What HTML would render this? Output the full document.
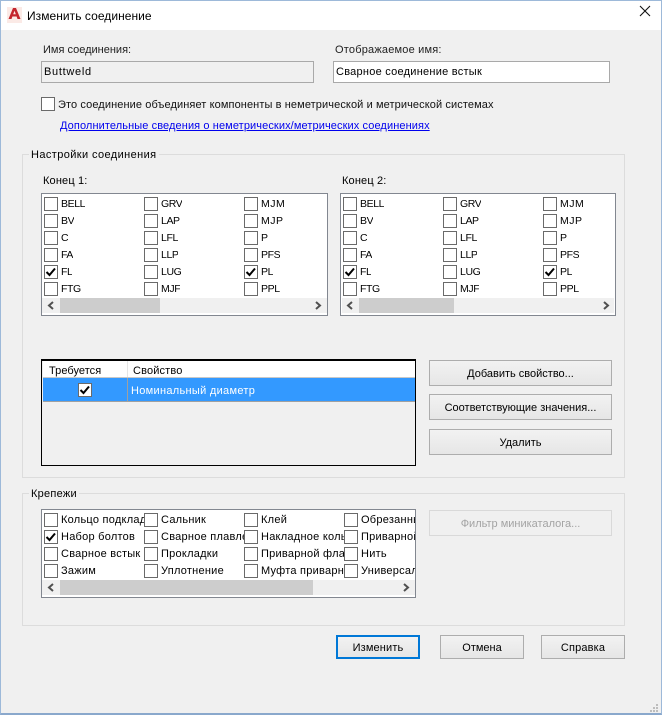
<!DOCTYPE html>
<html><head><meta charset="utf-8"><style>
html,body{margin:0;padding:0;width:662px;height:715px;overflow:hidden;background:#f0f0f0}
body{position:relative;font-family:"Liberation Sans",sans-serif;font-size:11px;color:#000;letter-spacing:.25px}
div,svg{position:absolute;box-sizing:border-box}
.t{line-height:14px;padding-top:1px;height:15px;white-space:nowrap;overflow:hidden}
.x{font-size:10.5px;letter-spacing:-.4px}
.m{font-size:10.5px;letter-spacing:.5px}
.c{width:14px;height:14px;border:1px solid #6a6a6a;background:#fff}
.b{border:1px solid #adadad;background:linear-gradient(#f2f2f2,#e6e6e6);text-align:center;white-space:nowrap;letter-spacing:0}
.g{border:1px solid #dcdcdc}
.l{background:#fff;border:1px solid #828790}
.sb{background:#f0f0f0;height:15px}
.th{background:#cdcdcd;height:15px}
</style></head><body>
<div style="left:0;top:0;width:662px;height:715px;border:1px solid #9db9d9;border-bottom:2px solid #8aa8cc"></div>
<div style="left:1px;top:1px;width:660px;height:29px;background:#fff"></div>
<div style="left:7px;top:7px;width:15px;height:16px;background:#fbeae6"></div>
<svg style="left:7px;top:7px" width="15" height="16" viewBox="0 0 15 16"><path d="M1.5 12 L6 1 H9 L13.5 12 H10.5 L9.6 9.5 H5.4 L4.5 12 Z M6.2 7.3 H8.8 L7.5 3.8 Z" fill="#c4262e" fill-rule="evenodd"/></svg>
<div class="t" style="left:27px;top:8px;font-size:12px;letter-spacing:.05px;height:16px">Изменить соединение</div>
<svg style="left:639px;top:5px" width="12" height="12" viewBox="0 0 12 12"><path d="M1 1 L11 11 M11 1 L1 11" stroke="#111" stroke-width="1.1"/></svg>

<div class="t" style="left:43px;top:42px;color:#222;letter-spacing:0">Имя соединения:</div>
<div style="left:41px;top:61px;width:273px;height:22px;background:#f0f0f0;border:1px solid #a9a9a9"></div>
<div class="t" style="left:44px;top:64px;letter-spacing:.7px">Buttweld</div>
<div class="t" style="left:335px;top:42px;color:#222;letter-spacing:.2px">Отображаемое имя:</div>
<div style="left:333px;top:61px;width:277px;height:22px;background:#fff;border:1px solid #a9a9a9"></div>
<div class="t" style="left:336px;top:64px">Сварное соединение встык</div>

<div class="c" style="left:41px;top:97px"></div>
<div class="t" style="left:58px;top:97px;color:#111;letter-spacing:.1px">Это соединение объединяет компоненты в неметрической и метрической системах</div>
<div class="t" style="left:60px;top:118px;color:#0000ee;text-decoration:underline;letter-spacing:.1px">Дополнительные сведения о неметрических/метрических соединениях</div>

<div class="g" style="left:22px;top:154px;width:603px;height:324px"></div>
<div class="t" style="left:29px;top:147px;background:#f0f0f0;padding:1px 2px 0;letter-spacing:.4px">Настройки соединения</div>
<div class="t" style="left:43px;top:173px;letter-spacing:.15px">Конец 1:</div>
<div class="l" style="left:41px;top:193px;width:287px;height:123px"></div>
<div class="t" style="left:342px;top:173px;letter-spacing:.15px">Конец 2:</div>
<div class="l" style="left:340px;top:193px;width:276px;height:123px"></div>

<div class="c" style="left:44px;top:197px"></div><div class="t x" style="left:61px;top:196px">BELL</div>
<div class="c" style="left:44px;top:214px"></div><div class="t x" style="left:61px;top:213px">BV</div>
<div class="c" style="left:44px;top:231px"></div><div class="t x" style="left:61px;top:230px">C</div>
<div class="c" style="left:44px;top:248px"></div><div class="t x" style="left:61px;top:247px">FA</div>
<div class="c" style="left:44px;top:265px"><svg style="left:0;top:0" width="12" height="12"><path d="M1.5 6 L4.5 9 L10 2.5" stroke="#000" stroke-width="2" fill="none"/></svg></div><div class="t x" style="left:61px;top:264px">FL</div>
<div class="c" style="left:44px;top:282px"></div><div class="t x" style="left:61px;top:281px">FTG</div>
<div class="c" style="left:144px;top:197px"></div><div class="t x" style="left:161px;top:196px">GRV</div>
<div class="c" style="left:144px;top:214px"></div><div class="t x" style="left:161px;top:213px">LAP</div>
<div class="c" style="left:144px;top:231px"></div><div class="t x" style="left:161px;top:230px">LFL</div>
<div class="c" style="left:144px;top:248px"></div><div class="t x" style="left:161px;top:247px">LLP</div>
<div class="c" style="left:144px;top:265px"></div><div class="t x" style="left:161px;top:264px">LUG</div>
<div class="c" style="left:144px;top:282px"></div><div class="t x" style="left:161px;top:281px">MJF</div>
<div class="c" style="left:244px;top:197px"></div><div class="t m" style="left:261px;top:196px">MJM</div>
<div class="c" style="left:244px;top:214px"></div><div class="t m" style="left:261px;top:213px">MJP</div>
<div class="c" style="left:244px;top:231px"></div><div class="t x" style="left:261px;top:230px">P</div>
<div class="c" style="left:244px;top:248px"></div><div class="t x" style="left:261px;top:247px">PFS</div>
<div class="c" style="left:244px;top:265px"><svg style="left:0;top:0" width="12" height="12"><path d="M1.5 6 L4.5 9 L10 2.5" stroke="#000" stroke-width="2" fill="none"/></svg></div><div class="t x" style="left:261px;top:264px">PL</div>
<div class="c" style="left:244px;top:282px"></div><div class="t x" style="left:261px;top:281px">PPL</div>
<div class="sb" style="left:42px;top:298px;width:285px"></div><div class="th" style="left:60px;top:298px;width:100px"></div>
<svg style="left:47px;top:301px" width="8" height="9"><path d="M6 1 L2 4.5 L6 8" stroke="#505050" stroke-width="2" fill="none"/></svg>
<svg style="left:314px;top:301px" width="8" height="9"><path d="M2 1 L6 4.5 L2 8" stroke="#505050" stroke-width="2" fill="none"/></svg>

<div class="c" style="left:343px;top:197px"></div><div class="t x" style="left:360px;top:196px">BELL</div>
<div class="c" style="left:343px;top:214px"></div><div class="t x" style="left:360px;top:213px">BV</div>
<div class="c" style="left:343px;top:231px"></div><div class="t x" style="left:360px;top:230px">C</div>
<div class="c" style="left:343px;top:248px"></div><div class="t x" style="left:360px;top:247px">FA</div>
<div class="c" style="left:343px;top:265px"><svg style="left:0;top:0" width="12" height="12"><path d="M1.5 6 L4.5 9 L10 2.5" stroke="#000" stroke-width="2" fill="none"/></svg></div><div class="t x" style="left:360px;top:264px">FL</div>
<div class="c" style="left:343px;top:282px"></div><div class="t x" style="left:360px;top:281px">FTG</div>
<div class="c" style="left:443px;top:197px"></div><div class="t x" style="left:460px;top:196px">GRV</div>
<div class="c" style="left:443px;top:214px"></div><div class="t x" style="left:460px;top:213px">LAP</div>
<div class="c" style="left:443px;top:231px"></div><div class="t x" style="left:460px;top:230px">LFL</div>
<div class="c" style="left:443px;top:248px"></div><div class="t x" style="left:460px;top:247px">LLP</div>
<div class="c" style="left:443px;top:265px"></div><div class="t x" style="left:460px;top:264px">LUG</div>
<div class="c" style="left:443px;top:282px"></div><div class="t x" style="left:460px;top:281px">MJF</div>
<div class="c" style="left:543px;top:197px"></div><div class="t m" style="left:560px;top:196px">MJM</div>
<div class="c" style="left:543px;top:214px"></div><div class="t m" style="left:560px;top:213px">MJP</div>
<div class="c" style="left:543px;top:231px"></div><div class="t x" style="left:560px;top:230px">P</div>
<div class="c" style="left:543px;top:248px"></div><div class="t x" style="left:560px;top:247px">PFS</div>
<div class="c" style="left:543px;top:265px"><svg style="left:0;top:0" width="12" height="12"><path d="M1.5 6 L4.5 9 L10 2.5" stroke="#000" stroke-width="2" fill="none"/></svg></div><div class="t x" style="left:560px;top:264px">PL</div>
<div class="c" style="left:543px;top:282px"></div><div class="t x" style="left:560px;top:281px">PPL</div>
<div class="sb" style="left:342px;top:298px;width:272px"></div><div class="th" style="left:359px;top:298px;width:95px"></div>
<svg style="left:346px;top:301px" width="8" height="9"><path d="M6 1 L2 4.5 L6 8" stroke="#505050" stroke-width="2" fill="none"/></svg>
<svg style="left:602px;top:301px" width="8" height="9"><path d="M2 1 L6 4.5 L2 8" stroke="#505050" stroke-width="2" fill="none"/></svg>

<div style="left:41px;top:359px;width:375px;height:107px;border:1px solid #000;border-width:2px 1px 1px 1px;background:#f0f0f0"></div>
<div style="left:43px;top:361px;width:372px;height:16px;background:#fff"></div>
<div style="left:127px;top:361px;width:1px;height:16px;background:#e5e5e5"></div>
<div class="t" style="left:49px;top:363px;letter-spacing:.05px">Требуется</div>
<div class="t" style="left:133px;top:363px;letter-spacing:.15px">Свойство</div>
<div style="left:43px;top:377px;width:372px;height:25px;background:#3399ff;border-top:1px solid #c8c8c8;border-bottom:1px solid #a0a0a0"></div>
<div style="left:127px;top:378px;width:1px;height:24px;background:#a0a0a0"></div>
<div class="c" style="left:78px;top:383px"><svg style="left:0;top:0" width="12" height="12"><path d="M1.5 6 L4.5 9 L10 2.5" stroke="#000" stroke-width="2" fill="none"/></svg></div>
<div class="t" style="left:131px;top:383px;color:#fff;letter-spacing:.3px">Номинальный диаметр</div>

<div class="b" style="left:429px;top:360px;width:183px;height:26px;line-height:26px">Добавить свойство...</div>
<div class="b" style="left:429px;top:394px;width:183px;height:26px;line-height:26px">Соответствующие значения...</div>
<div class="b" style="left:429px;top:429px;width:183px;height:26px;line-height:26px">Удалить</div>

<div class="g" style="left:22px;top:493px;width:603px;height:133px"></div>
<div class="t" style="left:29px;top:486px;background:#f0f0f0;padding:1px 2px 0">Крепежи</div>
<div class="l" style="left:41px;top:509px;width:375px;height:89px"></div>

<div class="t" style="left:61px;top:512px;width:83px">Кольцо подкладное</div><div class="c" style="left:44px;top:513px"></div>
<div class="t" style="left:61px;top:529px;width:83px">Набор болтов</div><div class="c" style="left:44px;top:530px"><svg style="left:0;top:0" width="12" height="12"><path d="M1.5 6 L4.5 9 L10 2.5" stroke="#000" stroke-width="2" fill="none"/></svg></div>
<div class="t" style="left:61px;top:546px;width:83px">Сварное встык</div><div class="c" style="left:44px;top:547px"></div>
<div class="t" style="left:61px;top:563px;width:83px">Зажим</div><div class="c" style="left:44px;top:564px"></div>
<div class="t" style="left:161px;top:512px;width:83px">Сальник</div><div class="c" style="left:144px;top:513px"></div>
<div class="t" style="left:161px;top:529px;width:83px">Сварное плавлением</div><div class="c" style="left:144px;top:530px"></div>
<div class="t" style="left:161px;top:546px;width:83px">Прокладки</div><div class="c" style="left:144px;top:547px"></div>
<div class="t" style="left:161px;top:563px;width:83px">Уплотнение</div><div class="c" style="left:144px;top:564px"></div>
<div class="t" style="left:261px;top:512px;width:83px">Клей</div><div class="c" style="left:244px;top:513px"></div>
<div class="t" style="left:261px;top:529px;width:83px">Накладное кольцо</div><div class="c" style="left:244px;top:530px"></div>
<div class="t" style="left:261px;top:546px;width:83px">Приварной фланец</div><div class="c" style="left:244px;top:547px"></div>
<div class="t" style="left:261px;top:563px;width:83px">Муфта приварная</div><div class="c" style="left:244px;top:564px"></div>
<div class="t" style="left:361px;top:512px;width:54px">Обрезанный</div><div class="c" style="left:344px;top:513px"></div>
<div class="t" style="left:361px;top:529px;width:54px">Приварной</div><div class="c" style="left:344px;top:530px"></div>
<div class="t" style="left:361px;top:546px;width:54px">Нить</div><div class="c" style="left:344px;top:547px"></div>
<div class="t" style="left:361px;top:563px;width:54px">Универсальный</div><div class="c" style="left:344px;top:564px"></div>
<div class="sb" style="left:42px;top:580px;width:373px"></div><div class="th" style="left:60px;top:580px;width:253px"></div>
<svg style="left:47px;top:583px" width="8" height="9"><path d="M6 1 L2 4.5 L6 8" stroke="#505050" stroke-width="2" fill="none"/></svg>
<svg style="left:402px;top:583px" width="8" height="9"><path d="M2 1 L6 4.5 L2 8" stroke="#505050" stroke-width="2" fill="none"/></svg>

<div class="b" style="left:429px;top:510px;width:183px;height:26px;line-height:26px;background:#f0f0f0;border-color:#d9d9d9;color:#a3a3a3">Фильтр миникаталога...</div>

<div class="b" style="left:336px;top:635px;width:84px;height:24px;line-height:22px;border:2px solid #0078d7;letter-spacing:.15px">Изменить</div>
<div class="b" style="left:440px;top:635px;width:84px;height:24px;line-height:24px">Отмена</div>
<div class="b" style="left:541px;top:635px;width:84px;height:24px;line-height:24px;letter-spacing:.15px">Справка</div>

<svg style="left:649px;top:704px" width="10" height="10"><path d="M7 0h2v2h-2z M4 3h2v2h-2z M7 3h2v2h-2z M1 6h2v2h-2z M4 6h2v2h-2z M7 6h2v2h-2z" fill="#bdbdbd"/></svg>
</body></html>
